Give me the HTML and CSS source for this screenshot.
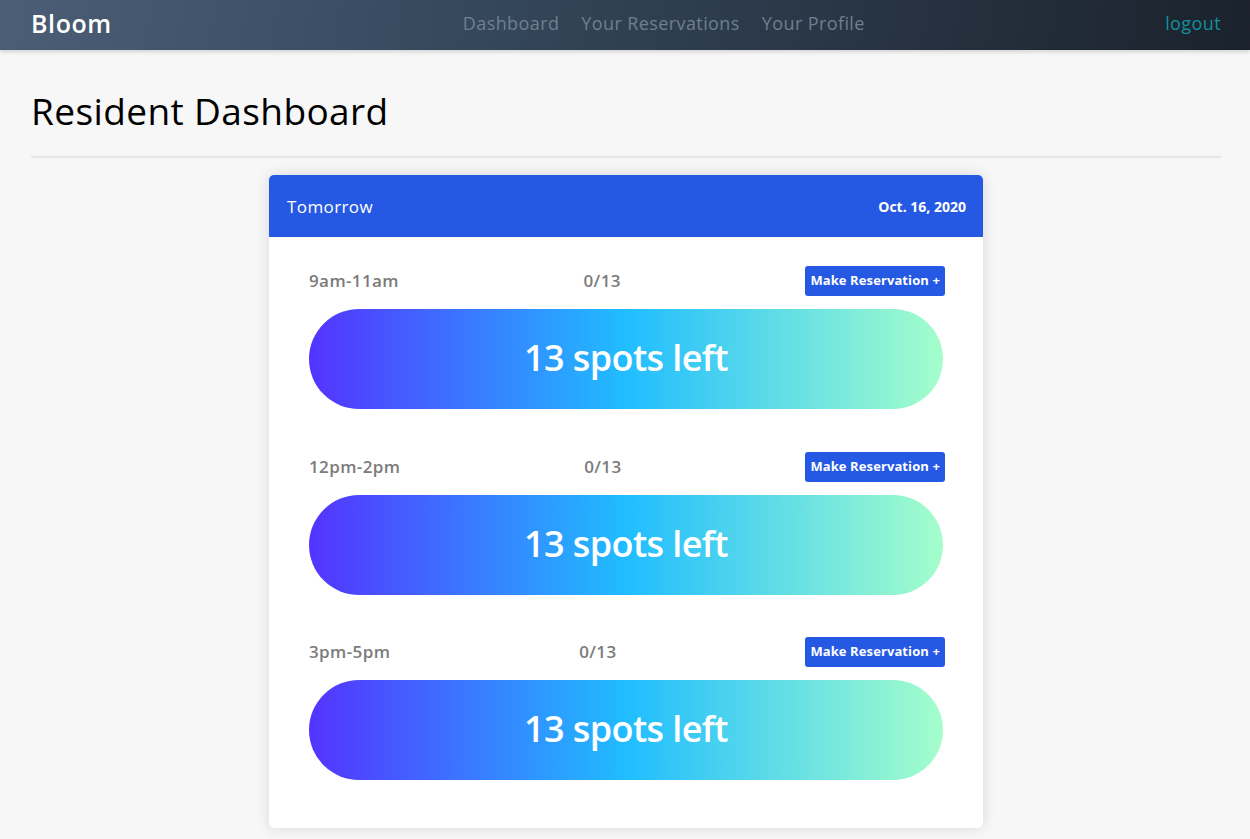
FILE: index.html
```html
<!DOCTYPE html>
<html lang="en">
<head>
<meta charset="utf-8">
<title>Bloom</title>
<link rel="stylesheet" href="styles.css">
</head>
<body>
<nav class="navbar">
  <a class="brand" href="#">Bloom</a>
  <ul class="nav-links">
    <li><a href="#">Dashboard</a></li>
    <li><a href="#">Your Reservations</a></li>
    <li><a href="#">Your Profile</a></li>
  </ul>
  <a class="logout" href="#">logout</a>
</nav>
<main class="page">
  <h1 class="title">Resident Dashboard</h1>
  <hr class="divider">
  <section class="card">
    <header class="card-head">
      <span class="day">Tomorrow</span>
      <span class="date">Oct. 16, 2020</span>
    </header>
    <div class="card-body">
      <div class="slot">
        <div class="slot-row">
          <span class="time">9am-11am</span>
          <span class="count">0/13</span>
          <button class="btn">Make Reservation +</button>
        </div>
        <div class="bar">13 spots left</div>
      </div>
      <div class="slot">
        <div class="slot-row">
          <span class="time">12pm-2pm</span>
          <span class="count">0/13</span>
          <button class="btn">Make Reservation +</button>
        </div>
        <div class="bar">13 spots left</div>
      </div>
      <div class="slot">
        <div class="slot-row">
          <span class="time">3pm-5pm</span>
          <span class="count">0/13</span>
          <button class="btn">Make Reservation +</button>
        </div>
        <div class="bar">13 spots left</div>
      </div>
    </div>
  </section>
</main>
</body>
</html>
```
FILE: styles.css
```css
* { box-sizing: border-box; }
html, body { margin: 0; padding: 0; }
body {
  background: #f7f7f7;
  font-family: "Open Sans", "Liberation Sans", sans-serif;
  color: #000;
  min-height: 839px;
}
a { text-decoration: none; }

.navbar {
  height: 50px;
  display: flex;
  align-items: center;
  padding: 0 29px 5px 31px;
  background: linear-gradient(100deg, #4b5e76 0%, #34465a 40%, #1b222c 100%);
  box-shadow: 0 2px 4px rgba(0,0,0,0.15);
}
.brand {
  color: #fff;
  font-size: 25px;
  font-weight: 600;
  letter-spacing: 0.6px;
}
.nav-links {
  list-style: none;
  display: flex;
  gap: 22px;
  margin: 0 auto 0 351px;
  padding: 0;
}
.nav-links a {
  color: #6f7f8f;
  font-size: 18px;
  letter-spacing: 0.4px;
}
.logout {
  color: #12909e;
  font-size: 18px;
  font-weight: 500;
  letter-spacing: 0.4px;
}

.page { padding: 0 29px 10px 31px; }
.title {
  margin: 0;
  padding-top: 39px;
  font-size: 37px;
  font-weight: 500;
  line-height: 44px;
  letter-spacing: 0.4px;
}
.divider {
  margin: 23px 0 17px;
  border: 0;
  border-top: 2px solid #e6e6e6;
}
.card {
  width: 714px;
  margin: 0 0 0 238px;
  background: #fff;
  border-radius: 5px;
  overflow: hidden;
  box-shadow: 0 0 14px rgba(0,0,0,0.13);
}
.card-head {
  height: 62px;
  background: #2559e3;
  display: flex;
  align-items: center;
  justify-content: space-between;
  padding: 0 17px 0 18px;
  color: #fff;
}
.day { font-size: 17px; letter-spacing: 0.4px; }
.date { font-size: 14px; font-weight: 700; letter-spacing: 0px; }

.card-body { padding: 29px 38px 48px 40px; }
.slot + .slot { margin-top: 42.5px; }
.slot-row {
  display: flex;
  align-items: center;
  justify-content: space-between;
  height: 30px;
}
.time, .count {
  color: #7b7b7b;
  font-size: 17px;
  font-weight: 600;
  letter-spacing: 0.4px;
  padding-bottom: 1px;
}
.btn {
  height: 30px;
  border: 0;
  border-radius: 3px;
  background: #2559e3;
  color: #fff;
  font-family: inherit;
  font-size: 13px;
  font-weight: 700;
  letter-spacing: 0.1px;
  padding: 0 5px 2px;
}
.bar {
  margin-top: 13px;
  width: calc(100% - 2px);
  height: 100px;
  border-radius: 50px;
  background: linear-gradient(to right, #5433ff, #20bdff, #a5fecb);
  color: #fff;
  font-size: 36px;
  font-weight: 600;
  letter-spacing: -0.6px;
  display: flex;
  align-items: center;
  justify-content: center;
  padding-bottom: 3px;
}
```
